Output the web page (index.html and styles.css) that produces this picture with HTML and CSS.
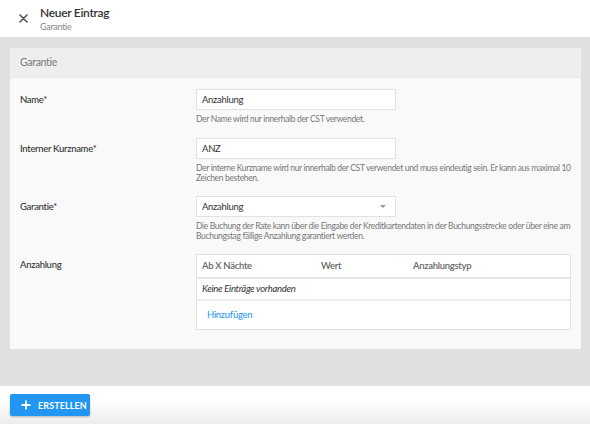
FILE: index.html
```html
<!DOCTYPE html>
<html lang="de">
<head>
  <meta charset="UTF-8" />
  <title>Neuer Eintrag</title>
  <link rel="stylesheet" href="styles.css">
</head>
<body>
  <div class="topbar">
    <button class="close-btn" aria-label="Schließen">
      <svg width="9" height="9" viewBox="0 0 9 9"><path d="M1 1L8 8M8 1L1 8" stroke="#555" stroke-width="1.6" stroke-linecap="round"/></svg>
    </button>
    <div class="title-block">
      <div class="title">Neuer Eintrag</div>
      <div class="subtitle">Garantie</div>
    </div>
  </div>

  <div class="content">
    <div class="card">
      <div class="card-header">Garantie</div>
      <div class="card-body">
        <div class="form-row">
          <label class="form-label">Name*</label>
          <div class="form-field">
            <div class="input">Anzahlung</div>
            <div class="help">Der Name wird nur innerhalb der CST verwendet.</div>
          </div>
        </div>
        <div class="form-row">
          <label class="form-label">Interner Kurzname*</label>
          <div class="form-field">
            <div class="input">ANZ</div>
            <div class="help">Der interne Kurzname wird nur innerhalb der CST verwendet und muss eindeutig sein. Er kann aus maximal 10 Zeichen bestehen.</div>
          </div>
        </div>
        <div class="form-row">
          <label class="form-label">Garantie*</label>
          <div class="form-field">
            <div class="input select">Anzahlung<span class="caret"></span></div>
            <div class="help">Die Buchung der Rate kann über die Eingabe der Kreditkartendaten in der Buchungsstrecke oder über eine am Buchungstag fällige Anzahlung garantiert werden.</div>
          </div>
        </div>
        <div class="form-row">
          <label class="form-label">Anzahlung</label>
          <div class="form-field">
            <div class="table">
              <div class="table-head">
                <span class="col-1">Ab X Nächte</span>
                <span class="col-2">Wert</span>
                <span class="col-3">Anzahlungstyp</span>
              </div>
              <div class="table-empty">Keine Einträge vorhanden</div>
              <div class="table-foot"><a class="link" href="#">Hinzufügen</a></div>
            </div>
          </div>
        </div>
      </div>
    </div>
  </div>

  <div class="footer">
    <button class="primary-btn">
      <svg width="10" height="10" viewBox="0 0 10 10"><path d="M5 0.5V9.5M0.5 5H9.5" stroke="#fff" stroke-width="1.8"/></svg>
      Erstellen
    </button>
  </div>
</body>
</html>
```

FILE: styles.css
```css
* { box-sizing: border-box; margin: 0; padding: 0; }
html, body { height: 100%; }
body {
  font-family: Lato, "Open Sans", sans-serif;
  color: #333;
  background: #fff;
  display: flex;
  flex-direction: column;
  overflow: hidden;
}
.topbar {
  height: 37px;
  display: flex;
  align-items: center;
  background: #fff;
  flex-shrink: 0;
}
.close-btn {
  width: 40px;
  height: 37px;
  border: none;
  background: none;
  display: flex;
  align-items: center;
  justify-content: center;
  padding-left: 6px;
  cursor: pointer;
}
.title {
  font-size: 12px;
  font-weight: 600;
  letter-spacing: -0.3px;
  color: #333;
  line-height: 15px;
}
.subtitle {
  font-size: 9px;
  letter-spacing: -0.3px;
  color: #888;
  line-height: 13px;
}

.content {
  flex: 1;
  background: #e0e0e0;
  padding: 11px 9px 10px 10px;
}
.card { background: #f9f9f9; }
.card-header {
  height: 30px;
  line-height: 29px;
  padding-left: 10px;
  background: #eee;
  border-bottom: 1px solid #e6e6e6;
  font-size: 10.5px;
  letter-spacing: -0.3px;
  color: #777;
}
.card-body { padding: 11px 10px 19px 10px; }
.form-row {
  display: grid;
  grid-template-columns: 176px 1fr;
  margin-bottom: 13px;
}
.form-row:first-child { margin-bottom: 14px; }
.form-row:last-child { margin-bottom: 0; }
.form-label {
  font-size: 9.5px;
  font-weight: 500;
  letter-spacing: -0.3px;
  line-height: 21px;
  color: #333;
}
.input {
  width: 200px;
  height: 21px;
  line-height: 19px;
  padding: 0 5px;
  background: #fff;
  border: 1px solid #e2e2e2;
  font-size: 9.5px;
  letter-spacing: -0.3px;
  color: #333;
}
.select { position: relative; }
.caret {
  position: absolute;
  right: 9px;
  top: 8px;
  border-left: 3.5px solid transparent;
  border-right: 3.5px solid transparent;
  border-top: 3.5px solid #999;
}
.help {
  margin-top: 4px;
  font-size: 8.5px;
  letter-spacing: -0.33px;
  line-height: 10px;
  color: #777;
}
.table {
  background: #fff;
  border: 1px solid #e2e2e2;
  font-size: 9.5px;
  letter-spacing: -0.3px;
}
.table-head {
  display: flex;
  height: 24px;
  line-height: 22px;
  padding-left: 5px;
  border-bottom: 2px solid #e8e8e8;
  color: #666;
  font-weight: 600;
}
.col-1 { width: 119px; }
.col-2 { width: 92px; }
.table-empty {
  height: 22px;
  line-height: 20px;
  padding-left: 5px;
  font-style: italic;
  border-bottom: 2px solid #ececec;
}
.table-foot {
  height: 28px;
  line-height: 27px;
  padding-left: 10px;
}
.link { color: #2196f3; text-decoration: none; }

.footer {
  height: 38px;
  flex-shrink: 0;
  padding: 8px 10px;
  background: linear-gradient(to bottom, #fff 40%, #ececec 100%);
}
.primary-btn {
  height: 22px;
  width: 80px;
  display: flex;
  align-items: center;
  gap: 7px;
  padding-left: 11px;
  border: none;
  border-radius: 2px;
  background: #2196f3;
  color: #fff;
  font-family: inherit;
  font-size: 9px;
  font-weight: 700;
  letter-spacing: 0.1px;
  text-transform: uppercase;
  box-shadow: 0 1px 2px rgba(0,0,0,0.25);
  cursor: pointer;
}
```
